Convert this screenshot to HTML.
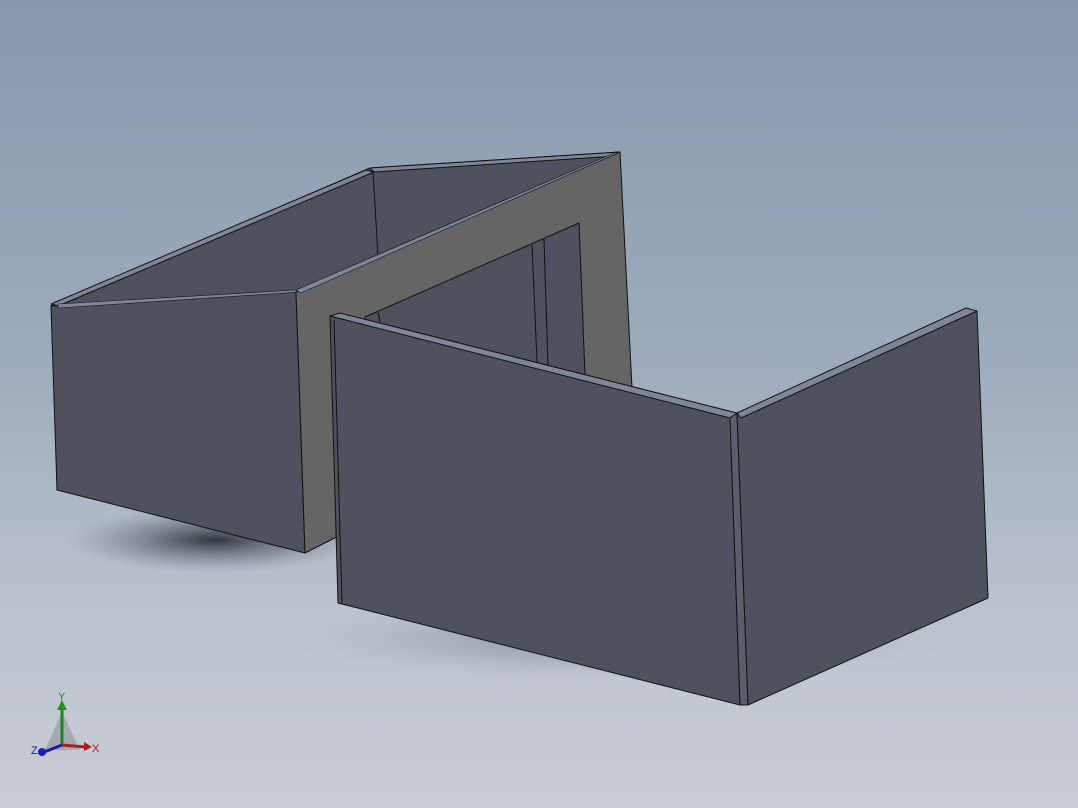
<!DOCTYPE html>
<html><head><style>
html,body{margin:0;padding:0;width:1078px;height:808px;overflow:hidden}
body{background:linear-gradient(180deg,#8898ad 0%,#9eabbc 45%,#bfc5cf 80%,#c8ccd4 100%)}
</style></head><body>
<svg width="1078" height="808" viewBox="0 0 1078 808" xmlns="http://www.w3.org/2000/svg" style="position:absolute;left:0;top:0">
<defs>
<radialGradient id="sh" cx="0.5" cy="0.5" r="0.5">
<stop offset="0" stop-color="#23262d" stop-opacity="0.9"/>
<stop offset="0.6" stop-color="#5a616e" stop-opacity="0.4"/>
<stop offset="1" stop-color="#8a93a3" stop-opacity="0"/>
</radialGradient>
</defs>
<ellipse cx="215" cy="540" rx="150" ry="34" fill="url(#sh)"/>
<ellipse cx="620" cy="640" rx="330" ry="40" fill="url(#sh)" opacity="0.4"/>
<g stroke="#111" stroke-width="1" stroke-linejoin="round">
<polygon points="51,306 370,168 620,152 296,292" fill="#4f525e"/>
<polygon points="370,168 620,152 617,156 374,172" fill="#7f869a"/>
<polygon points="51,304 366,170 374,172 58,306" fill="#7f869a"/>
<line x1="373" y1="172" x2="378" y2="256"/>
<polygon points="51,306 296,292 305,553 57,490" fill="#4f525e"/>
<polygon points="58,304 296,290 300,292 58,308" fill="#7f869a" stroke-width="0.6"/>
<polygon points="296,292 620,152 632,388 305,553" fill="#656565"/>
<polygon points="296,290 614,153 620,152 301,293" fill="#7f869a" stroke-width="0.6"/>
<polygon points="365,317 579,223 585,375 365,390" fill="#4f525e"/>
<line x1="532" y1="245" x2="537" y2="362"/>
<line x1="544" y1="239" x2="548" y2="366"/>
<line x1="378" y1="312" x2="380" y2="322"/>
<polygon points="330,316 730,415 740,705 338,603" fill="#4f525e"/>
<polygon points="330,316 340,313 737,413 730,418" fill="#7f869a"/>
<polygon points="730,418 737,413 748,705 740,705" fill="#5a5e6b"/>
<polygon points="737,413 977,311 988,598 748,705" fill="#4f525e"/>
<polygon points="737,413 966,308 977,311 741,418" fill="#7f869a"/>
<line x1="334" y1="320" x2="342" y2="603"/>
</g>
<g font-family="Liberation Sans, sans-serif" font-size="11">
<path d="M45,750 L62,712 L80,750 Z" fill="#8f949c" opacity="0.6"/>
<line x1="62" y1="745" x2="62" y2="708" stroke="#1a8a1a" stroke-width="3"/>
<polygon points="57,710 62,700 67,710" fill="#1a9a1a"/>
<text x="58" y="700" fill="#1a9a1a">Y</text>
<line x1="62" y1="745" x2="86" y2="747" stroke="#b01c1c" stroke-width="3"/>
<polygon points="84,742 92,747 84,751" fill="#b01c1c"/>
<text x="92" y="752" fill="#b01c1c">X</text>
<line x1="62" y1="745" x2="44" y2="752" stroke="#1c1cb0" stroke-width="3"/>
<circle cx="42" cy="752" r="4" fill="#1c1cb0"/>
<text x="31" y="754" fill="#1c1cb0">Z</text>
</g>
</svg>
</body></html>
